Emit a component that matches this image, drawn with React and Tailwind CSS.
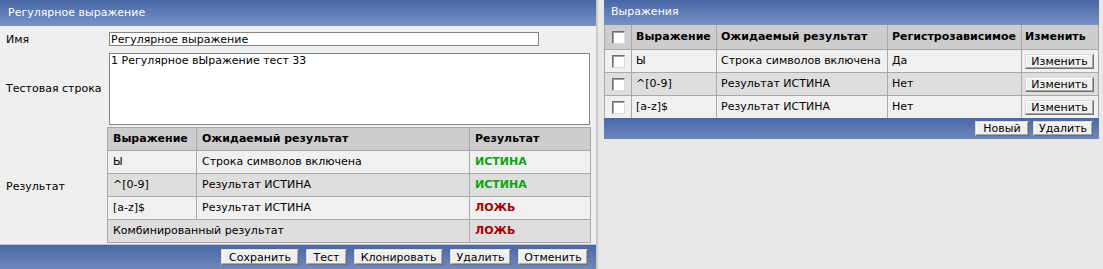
import React from "react";

const font = { fontFamily: '"DejaVu Sans", Verdana, sans-serif' };

function Btn({ w, children, h = "h-[16px]" }) {
  return (
    <span
      className={`${w} ${h} inline-flex items-center justify-center bg-[#efefef] text-black text-[11px] leading-none border border-t-[#d8d8d8] border-l-[#d8d8d8] border-r-[#6f6f6f] border-b-[#6f6f6f] shadow-[inset_-1px_-1px_0_#a8a8a8,inset_1px_1px_0_#ffffff]`}
    >
      {children}
    </span>
  );
}

function Check() {
  return (
    <span className="inline-block w-[13px] h-[13px] bg-white border border-t-[#6f6f6f] border-l-[#6f6f6f] border-r-[#dcdcdc] border-b-[#dcdcdc] shadow-[inset_1px_1px_0_#a0a0a0]" />
  );
}

const leftRows = [
  { e: "Ы", r: "Строка символов включена", v: "ИСТИНА", ok: true, bg: "bg-[#f0f0f0]" },
  { e: "^[0-9]", r: "Результат ИСТИНА", v: "ИСТИНА", ok: true, bg: "bg-[#dedede]" },
  { e: "[a-z]$", r: "Результат ИСТИНА", v: "ЛОЖЬ", ok: false, bg: "bg-[#f0f0f0]" },
];

const rightRows = [
  { e: "Ы", r: "Строка символов включена", c: "Да", bg: "bg-[#f0f0f0]" },
  { e: "^[0-9]", r: "Результат ИСТИНА", c: "Нет", bg: "bg-[#dedede]" },
  { e: "[a-z]$", r: "Результат ИСТИНА", c: "Нет", bg: "bg-[#f0f0f0]" },
];

export default function App() {
  return (
    <div
      className="w-[1103px] h-[269px] bg-[#e8e8e8] flex items-start text-[11px] text-black overflow-hidden"
      style={font}
    >
      {/* Left panel */}
      <div className="w-[598px] h-[269px] flex flex-col border-r-2 border-[#cdcdcd] bg-[#efefef]">
        <div className="h-[26px] shrink-0 bg-linear-to-b from-[#4766a6] to-[#7892c4] text-white flex items-center pl-[8px]">
          Регулярное выражение
        </div>
        <div className="flex flex-col pt-[6px] pr-[5px]">
          <div className="flex items-center h-[14px]">
            <div className="w-[107px] pl-[6px] mt-[2px]">Имя</div>
            <div className="ml-[2px] w-[430px] h-[14px] bg-white border border-[#858585] flex items-center pl-[1px] leading-none">
              Регулярное выражение
            </div>
          </div>
          <div className="flex items-center mt-[7px]">
            <div className="w-[107px] pl-[6px]">Тестовая строка</div>
            <div className="ml-[2px] w-[481px] h-[72px] bg-white border border-[#858585] pl-[1px] leading-[13px]">
              1 Регулярное вЫражение тест 33
            </div>
          </div>
          <div className="flex items-center mt-[2px]">
            <div className="w-[107px] pl-[6px] mt-[5px]">Результат</div>
            <div className="w-[484px] bg-[#a9a9a9] border border-[#a9a9a9] grid grid-cols-[88px_272px_1fr] gap-px">
              <div className="h-[22px] bg-[#cdcdcd] font-bold flex items-center pl-[5px]">Выражение</div>
              <div className="h-[22px] bg-[#cdcdcd] font-bold flex items-center pl-[5px]">Ожидаемый результат</div>
              <div className="h-[22px] bg-[#cdcdcd] font-bold flex items-center pl-[5px]">Результат</div>
              {leftRows.map((r, i) => (
                <React.Fragment key={i}>
                  <div className={`h-[22px] ${r.bg} flex items-center pl-[5px]`}>{r.e}</div>
                  <div className={`h-[22px] ${r.bg} flex items-center pl-[5px]`}>{r.r}</div>
                  <div
                    className={`h-[22px] ${r.bg} flex items-center pl-[5px] font-bold ${r.ok ? "text-[#0aa50a]" : "text-[#a80000]"}`}
                  >
                    {r.v}
                  </div>
                </React.Fragment>
              ))}
              <div className="col-span-2 h-[22px] bg-[#dedede] flex items-center pl-[5px]">Комбинированный результат</div>
              <div className="h-[22px] bg-[#dedede] flex items-center pl-[5px] font-bold text-[#a80000]">ЛОЖЬ</div>
            </div>
          </div>
        </div>
        <div className="mt-[1px] h-[1px] bg-[#c4c4c4]" />
        <div className="flex-1 bg-linear-to-b from-[#4867a6] to-[#7089bd] flex items-center justify-end gap-[7px] pr-[8px]">
          <Btn w="w-[78px]">Сохранить</Btn>
          <Btn w="w-[41px]">Тест</Btn>
          <Btn w="w-[89px]">Клонировать</Btn>
          <Btn w="w-[61px]">Удалить</Btn>
          <Btn w="w-[70px]">Отменить</Btn>
        </div>
      </div>

      {/* Right panel */}
      <div className="ml-[6px] w-[495px] flex flex-col bg-[#efefef]">
        <div className="h-[25px] bg-linear-to-b from-[#4766a6] to-[#7892c4] text-white flex items-center pl-[7px]">
          Выражения
        </div>
        <div className="bg-[#a9a9a9] border-x border-[#a9a9a9] grid grid-cols-[26px_84px_170px_133px_1fr] gap-px">
          <div className="h-[24px] bg-[#cdcdcd] flex items-center justify-center"><Check /></div>
          <div className="h-[24px] bg-[#cdcdcd] font-bold flex items-center pl-[4px]">Выражение</div>
          <div className="h-[24px] bg-[#cdcdcd] font-bold flex items-center pl-[4px]">Ожидаемый результат</div>
          <div className="h-[24px] bg-[#cdcdcd] font-bold flex items-center pl-[4px]">Регистрозависимое</div>
          <div className="h-[24px] bg-[#cdcdcd] font-bold flex items-center pl-[3px]">Изменить</div>
          {rightRows.map((r, i) => (
            <React.Fragment key={i}>
              <div className={`h-[22px] ${r.bg} flex items-center justify-center`}><Check /></div>
              <div className={`h-[22px] ${r.bg} flex items-center pl-[4px]`}>{r.e}</div>
              <div className={`h-[22px] ${r.bg} flex items-center pl-[4px]`}>{r.r}</div>
              <div className={`h-[22px] ${r.bg} flex items-center pl-[4px]`}>{r.c}</div>
              <div className={`h-[22px] ${r.bg} flex items-center pl-[3px]`}>
                <Btn w="w-[69px]" h="h-[15px]">Изменить</Btn>
              </div>
            </React.Fragment>
          ))}
        </div>
        <div className="h-[21px] bg-linear-to-b from-[#4867a6] to-[#7089bd] flex items-center justify-end gap-[4px] pr-[6px]">
          <Btn w="w-[54px]" h="h-[15px]">Новый</Btn>
          <Btn w="w-[60px]" h="h-[15px]">Удалить</Btn>
        </div>
      </div>
    </div>
  );
}
